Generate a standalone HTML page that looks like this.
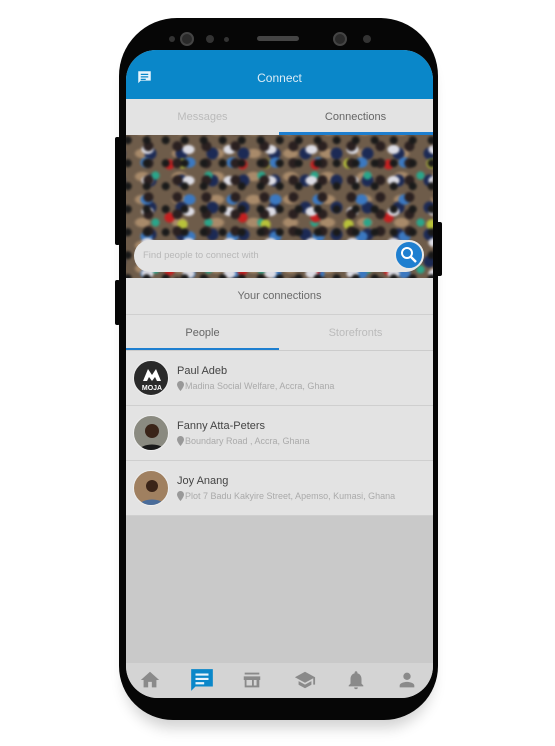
<!DOCTYPE html>
<html><head><meta charset="utf-8"><style>
*{margin:0;padding:0;box-sizing:border-box}
body{width:555px;height:746px;background:#fff;position:relative;overflow:hidden;font-family:"Liberation Sans",sans-serif}
.phone{position:absolute;left:119px;top:18px;width:319px;height:702px;background:#060606;border-radius:58px 58px 54px 54px;box-shadow:0 14px 14px -6px rgba(0,0,0,.18)}
.btn{position:absolute;background:#060606;border-radius:2px}
.screen{position:absolute;left:126px;top:50px;width:307px;height:648px;border-radius:30px 30px 32px 32px;overflow:hidden;background:#c9c9c9}
.hdr{position:absolute;left:0;top:0;width:307px;height:49px;background:#0a87c9;color:#dcecf6;font-size:12px;text-align:center;line-height:56px}
.tabs{position:absolute;left:0;width:307px;height:36px;background:#e3e3e3;font-size:11px}
.tabs div{position:absolute;top:0;width:153px;text-align:center;line-height:36px}
.crowdwrap{position:absolute;left:0;top:85px;width:307px;height:143px;overflow:hidden}
.crowd{position:absolute;left:-4px;top:-4px;width:315px;height:151px;filter:blur(1.1px);background:
radial-gradient(circle at 30% 40%,#1a1a1a 0 3px,transparent 5px) 0 0/19px 23px,
radial-gradient(circle at 60% 60%,#2a2020 0 4px,transparent 6px) 9px 5px/29px 17px,
radial-gradient(ellipse at 50% 50%,#dcdce4 0 5px,transparent 7px) 5px 3px/41px 31px,
radial-gradient(circle at 50% 50%,#c52020 0 4px,transparent 6px) 11px 7px/73px 53px,
radial-gradient(ellipse at 50% 50%,#3b78c0 0 5px,transparent 7px) 3px 13px/43px 37px,
radial-gradient(circle at 50% 50%,#b8c23a 0 4px,transparent 6px) 19px 2px/83px 61px,
radial-gradient(circle at 50% 50%,#2aa58a 0 3px,transparent 5px) 7px 21px/53px 47px,
radial-gradient(circle at 50% 50%,#1c2a55 0 5px,transparent 7px) 13px 9px/31px 27px,
radial-gradient(ellipse at 50% 50%,#a88a6a 0 6px,transparent 9px) 2px 11px/37px 23px,
#6e5c4a}
.search{position:absolute;left:8px;top:190px;width:288px;height:32px;background:#e4e4e4;border-radius:16px;color:#b8b8b8;font-size:9.5px;line-height:32px;padding-left:9px}
.sbtn{position:absolute;left:268px;top:190px;width:30px;height:30px;border-radius:50%;background:#1e7fd0;border:2px solid #e8e8e8}
.yc{position:absolute;left:0;top:228px;width:307px;height:37px;background:#e3e3e3;color:#6a6a6a;font-size:11px;text-align:center;line-height:37px;border-bottom:1px solid #d0d0d0}
.row{position:absolute;left:0;width:307px;height:55px;background:#e3e3e3;border-bottom:1px solid #cfcfcf}
.av{position:absolute;left:7px;top:9px;width:36px;height:36px;border-radius:50%;border:1px solid #eee;overflow:hidden}
.nm{position:absolute;left:51px;top:14px;font-size:11px;color:#444}
.ad{position:absolute;left:51px;top:30px;font-size:9px;color:#aaa}
.ad svg{vertical-align:-2px;margin-right:1px}
.nav{position:absolute;left:0;top:613px;width:307px;height:35px;background:#d4d4d4}
.nav svg{position:absolute;top:6px}
</style></head><body>
<div class="btn" style="left:115px;top:137px;width:5px;height:108px"></div>
<div class="btn" style="left:115px;top:280px;width:5px;height:45px"></div>
<div class="btn" style="left:436px;top:222px;width:6px;height:54px"></div>
<div class="phone"></div>
<div style="position:absolute;left:169px;top:36px;width:6px;height:6px;border-radius:50%;background:#333"></div>
<div style="position:absolute;left:180px;top:32px;width:14px;height:14px;border-radius:50%;background:#2a2a2a;border:2px solid #444"></div>
<div style="position:absolute;left:206px;top:35px;width:8px;height:8px;border-radius:50%;background:#333"></div>
<div style="position:absolute;left:224px;top:37px;width:5px;height:5px;border-radius:50%;background:#333"></div>
<div style="position:absolute;left:257px;top:36px;width:42px;height:5px;border-radius:3px;background:#444"></div>
<div style="position:absolute;left:333px;top:32px;width:14px;height:14px;border-radius:50%;background:#2a2a2a;border:2px solid #444"></div>
<div style="position:absolute;left:363px;top:35px;width:8px;height:8px;border-radius:50%;background:#333"></div>
<div class="screen">
 <div class="hdr">Connect
  <svg style="position:absolute;left:11px;top:20px" width="15" height="15" viewBox="0 0 24 24"><path fill="#e8f4fc" d="M2 2h20v15H6l-4 4z"/><path fill="#0a87c9" d="M6 6h12v2H6zm0 4h12v2H6zm0 4h8v2H6z"/></svg></div>
 <div class="tabs" style="top:49px"><div style="left:0;color:#bbb">Messages</div><div style="left:153px;color:#666">Connections</div>
  <span style="position:absolute;left:153px;top:33px;width:154px;height:3px;background:#1e7fd0"></span></div>
 <div class="crowdwrap"><div class="crowd"></div></div>
 <div class="search">Find people to connect with</div>
 <div class="sbtn"><svg width="26" height="26" viewBox="0 0 26 26"><circle cx="11" cy="11" r="5" fill="none" stroke="#fff" stroke-width="2"/><path d="M15 15l5 5" stroke="#fff" stroke-width="2.4"/></svg></div>
 <div class="yc">Your connections</div>
 <div class="tabs" style="top:265px;border-bottom:1px solid #ccc"><div style="left:0;color:#666">People</div><div style="left:153px;color:#bbb">Storefronts</div>
  <span style="position:absolute;left:0;top:33px;width:153px;height:2px;background:#1e7fd0"></span></div>
 <div class="row" style="top:301px"><div class="av" style="background:#2a2a2a"><svg width="36" height="36" viewBox="0 0 36 36"><path d="M9 20l5-12 4 6 4-6 5 12h-4l-2-4-3 4-3-4-2 4z" fill="#fff"/><text x="18" y="29" font-size="7" font-weight="bold" fill="#fff" text-anchor="middle" font-family="Liberation Sans">MOJA</text></svg></div>
  <div class="nm">Paul Adeb</div><div class="ad"><svg width="7" height="10" viewBox="0 0 7 10"><path d="M3.5 0A3.5 3.5 0 0 0 0 3.5C0 6 3.5 10 3.5 10S7 6 7 3.5A3.5 3.5 0 0 0 3.5 0z" fill="#999"/></svg>Madina Social Welfare, Accra, Ghana</div></div>
 <div class="row" style="top:356px"><div class="av" style="background:#8a8a80"><svg width="36" height="36"><circle cx="18" cy="15" r="7" fill="#3a2418"/><path d="M4 36c2-10 26-10 28 0z" fill="#1a1a1a"/></svg></div>
  <div class="nm">Fanny Atta-Peters</div><div class="ad"><svg width="7" height="10" viewBox="0 0 7 10"><path d="M3.5 0A3.5 3.5 0 0 0 0 3.5C0 6 3.5 10 3.5 10S7 6 7 3.5A3.5 3.5 0 0 0 3.5 0z" fill="#999"/></svg>Boundary Road , Accra, Ghana</div></div>
 <div class="row" style="top:411px"><div class="av" style="background:#a08060"><svg width="36" height="36"><circle cx="18" cy="15" r="6" fill="#3a2418"/><path d="M4 36c2-10 26-10 28 0z" fill="#4a6c9a"/></svg></div>
  <div class="nm">Joy Anang</div><div class="ad"><svg width="7" height="10" viewBox="0 0 7 10"><path d="M3.5 0A3.5 3.5 0 0 0 0 3.5C0 6 3.5 10 3.5 10S7 6 7 3.5A3.5 3.5 0 0 0 3.5 0z" fill="#999"/></svg>Plot 7 Badu Kakyire Street, Apemso, Kumasi, Ghana</div></div>
 <div class="nav">
  <svg style="left:12px" width="24" height="22" viewBox="0 0 24 24"><path d="M10 20v-6h4v6h5v-8h3L12 3 2 12h3v8z" fill="#8a8a8a"/></svg>
  <svg style="left:63px;top:4px" width="26" height="26" viewBox="0 0 24 24"><path d="M2 2h20v16H6l-4 4z" fill="#0a87c9"/><path d="M6 6h12v2H6zm0 4h12v2H6zm0 4h8v2H6z" fill="#e8f4fc"/></svg>
  <svg style="left:114px" width="24" height="22" viewBox="0 0 24 24"><path d="M4 4h16v2H4zm-1 4h18v4h-1v8H4v-8H3zm3 4v6h6v-6zm8 0v6h3v-6z" fill="#8a8a8a"/></svg>
  <svg style="left:166px" width="26" height="22" viewBox="0 0 24 24"><path d="M12 3L1 9l11 6 9-4.9V17h2V9zM5 13.2v4L12 21l7-3.8v-4L12 17z" fill="#8a8a8a"/></svg>
  <svg style="left:218px" width="24" height="22" viewBox="0 0 24 24"><path d="M12 22a2 2 0 0 0 2-2h-4a2 2 0 0 0 2 2zm6-6v-5c0-3-1.6-5.6-4.5-6.3V4a1.5 1.5 0 0 0-3 0v.7C7.6 5.4 6 8 6 11v5l-2 2v1h16v-1z" fill="#8a8a8a"/></svg>
  <svg style="left:269px" width="24" height="22" viewBox="0 0 24 24"><path d="M12 12a4 4 0 1 0 0-8 4 4 0 0 0 0 8zm0 2c-2.7 0-8 1.3-8 4v2h16v-2c0-2.7-5.3-4-8-4z" fill="#8a8a8a"/></svg>
 </div>
</div>
</body></html>
